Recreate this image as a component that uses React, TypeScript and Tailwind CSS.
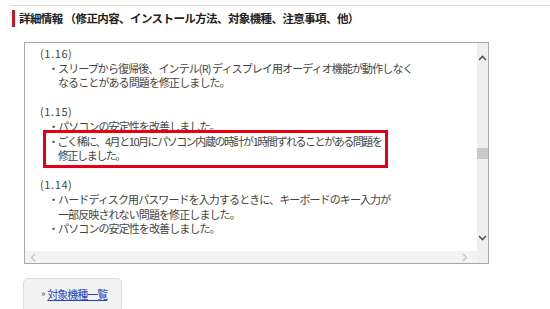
import React from "react";

const font = {
  fontFamily: '"Noto Sans CJK JP", "Liberation Sans", sans-serif',
};

function Line({ children, indent = false }: { children: React.ReactNode; indent?: boolean }) {
  return <div className={indent ? "pl-[18px]" : "pl-[8px]"}>{children}</div>;
}

function Ver({ children }: { children: React.ReactNode }) {
  return <div className="tracking-[0.6px]">{children}</div>;
}

export default function App() {
  return (
    <div className="w-[550px] h-[309px] overflow-hidden bg-white text-[#333]" style={font}>
      <div className="ml-[10px] pt-[5px]">
        <div className="h-px bg-[#dcdcdc]" />
        {/* Header */}
        <div className="mt-[4px] flex items-center h-[17px]">
          <div className="w-[3px] h-[17px] bg-[#c8161d] ml-[2px]" />
          <h2 className="ml-[4px] text-[11.5px] font-bold text-[#222] tracking-[-0.6px] leading-none">
            詳細情報 （修正内容、インストール方法、対象機種、注意事項、他）
          </h2>
        </div>
      </div>

      {/* Scroll box */}
      <div className="ml-[24px] mt-[15px] w-[465px] h-[222px] border border-[#a8a8a8] flex flex-col">
        <div className="flex flex-1 min-h-0">
          <div className="flex-1 overflow-hidden pl-[15px] pt-[3px] text-[11px] leading-[14.6px] tracking-[-0.9px] text-[#444]">
            <Ver>(1.16)</Ver>
            <Line>・スリープから復帰後、インテル(R) ディスプレイ用オーディオ機能が動作しなく</Line>
            <Line indent>なることがある問題を修正しました。</Line>
            <div className="h-[14.6px]" />
            <Ver>(1.15)</Ver>
            <Line>・パソコンの安定性を改善しました。</Line>
            <div className="relative tracking-[-1.45px]">
              <Line>・ごく稀に、4月と10月にパソコン内蔵の時計が1時間ずれることがある問題を</Line>
              <Line indent>修正しました。</Line>
              <div className="absolute -top-[4px] -bottom-[5px] left-[3px] w-[345px] border-[3px] border-[#e60012]" />
            </div>
            <div className="h-[14.6px]" />
            <Ver>(1.14)</Ver>
            <Line>・ハードディスク用パスワードを入力するときに、キーボードのキー入力が</Line>
            <Line indent>一部反映されない問題を修正しました。</Line>
            <Line>・パソコンの安定性を改善しました。</Line>
            <div className="h-[14.6px]" />
            <Ver>(1.09)</Ver>
          </div>
          {/* Vertical scrollbar */}
          <div className="w-[11px] bg-[#efefef] flex flex-col items-center">
            <svg width="9" height="6" viewBox="0 0 9 6" className="mt-[12px]">
              <path d="M1 5 L4.5 1.5 L8 5" fill="none" stroke="#555" strokeWidth="1.6" />
            </svg>
            <div className="mt-[87px] w-[11px] h-[11px] bg-[#c9c9c9]" />
            <div className="flex-1" />
            <svg width="9" height="6" viewBox="0 0 9 6" className="mb-[10px]">
              <path d="M1 1 L4.5 4.5 L8 1" fill="none" stroke="#555" strokeWidth="1.6" />
            </svg>
          </div>
        </div>
        {/* Horizontal scrollbar */}
        <div className="h-[12px] flex">
          <div className="flex-1 bg-[#f3f3f3] flex items-center justify-between px-[5px]">
            <svg width="6" height="9" viewBox="0 0 6 9">
              <path d="M5 1 L1.5 4.5 L5 8" fill="none" stroke="#c4c4c4" strokeWidth="1.4" />
            </svg>
            <svg width="6" height="9" viewBox="0 0 6 9" className="mr-[4px]">
              <path d="M1 1 L4.5 4.5 L1 8" fill="none" stroke="#c4c4c4" strokeWidth="1.4" />
            </svg>
          </div>
          <div className="w-[11px] bg-[#efefef]" />
        </div>
      </div>

      {/* Button */}
      <div className="ml-[23px] mt-[14px] w-[99px] h-[34px] rounded-[5px] border border-[#dcdcdc] bg-[#f2f2f2] flex items-start pt-[8px] pl-[17px] text-[11px] tracking-[-1px]">
        <span className="text-[9px] text-[#555] mr-[3px] leading-[14px]">»</span>
        <a href="#" className="text-[#2344b8] underline leading-[14px]">
          対象機種一覧
        </a>
      </div>
    </div>
  );
}
